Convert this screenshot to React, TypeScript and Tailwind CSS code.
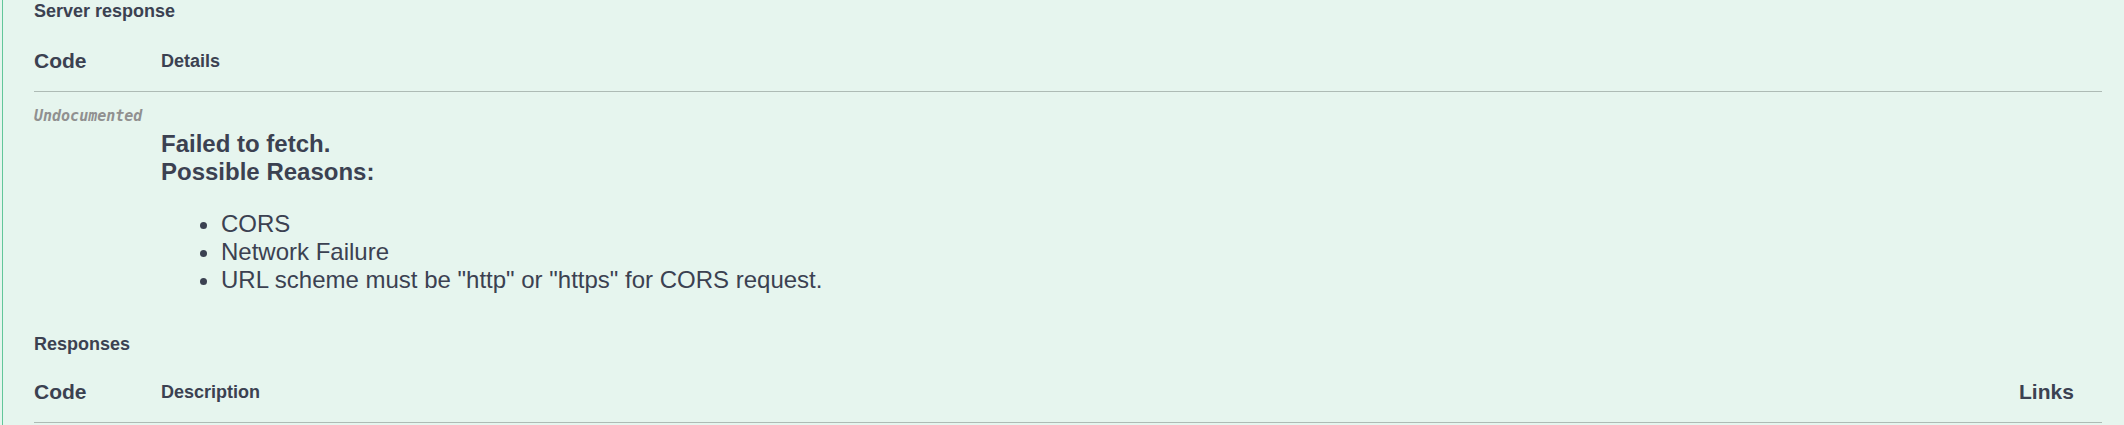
import React from "react";

const sans = { fontFamily: '"Liberation Sans", Arial, sans-serif' };

export default function App() {
  return (
    <div
      className="w-full h-[425px] overflow-hidden bg-[#e6f5ee] text-[#3b4151] pl-[2px]"
      style={sans}
    >
      <div className="h-full border-l border-[#62c79a] pl-[31px] pr-[22px]">
        <h4 className="h-[23px] text-[18px] leading-[23px] font-bold">Server response</h4>

        <div className="flex items-start pt-[26px] pb-[18px] border-b border-[#aebbb5]">
          <div className="w-[127px] text-[21px] leading-[24px] font-bold">Code</div>
          <div className="mt-[2px] text-[18px] leading-[21px] font-bold">Details</div>
        </div>

        <div className="pt-[16px]">
          <div
            className="h-[17px] text-[15px] leading-[17px] italic font-semibold text-[#909090]"
            style={{ fontFamily: '"DejaVu Sans Mono", monospace' }}
          >
            Undocumented
          </div>
          <div className="mt-[5px] pl-[127px] text-[24px] leading-[28px]">
            <div className="font-bold">Failed to fetch.</div>
            <div className="font-bold">Possible Reasons:</div>
            <ul className="mt-[24px] pl-[60px] list-disc">
              <li>CORS</li>
              <li>Network Failure</li>
              <li>URL scheme must be "http" or "https" for CORS request.</li>
            </ul>
          </div>
        </div>

        <h4 className="mt-[39px] h-[23px] text-[18px] leading-[23px] font-bold">Responses</h4>

        <div className="flex items-start pt-[24px] pb-[18px] border-b border-[#aebbb5]">
          <div className="w-[127px] text-[21px] leading-[24px] font-bold">Code</div>
          <div className="flex-1 mt-[2px] text-[18px] leading-[21px] font-bold">Description</div>
          <div className="w-[83px] text-[21px] leading-[24px] font-bold">Links</div>
        </div>
      </div>
    </div>
  );
}
